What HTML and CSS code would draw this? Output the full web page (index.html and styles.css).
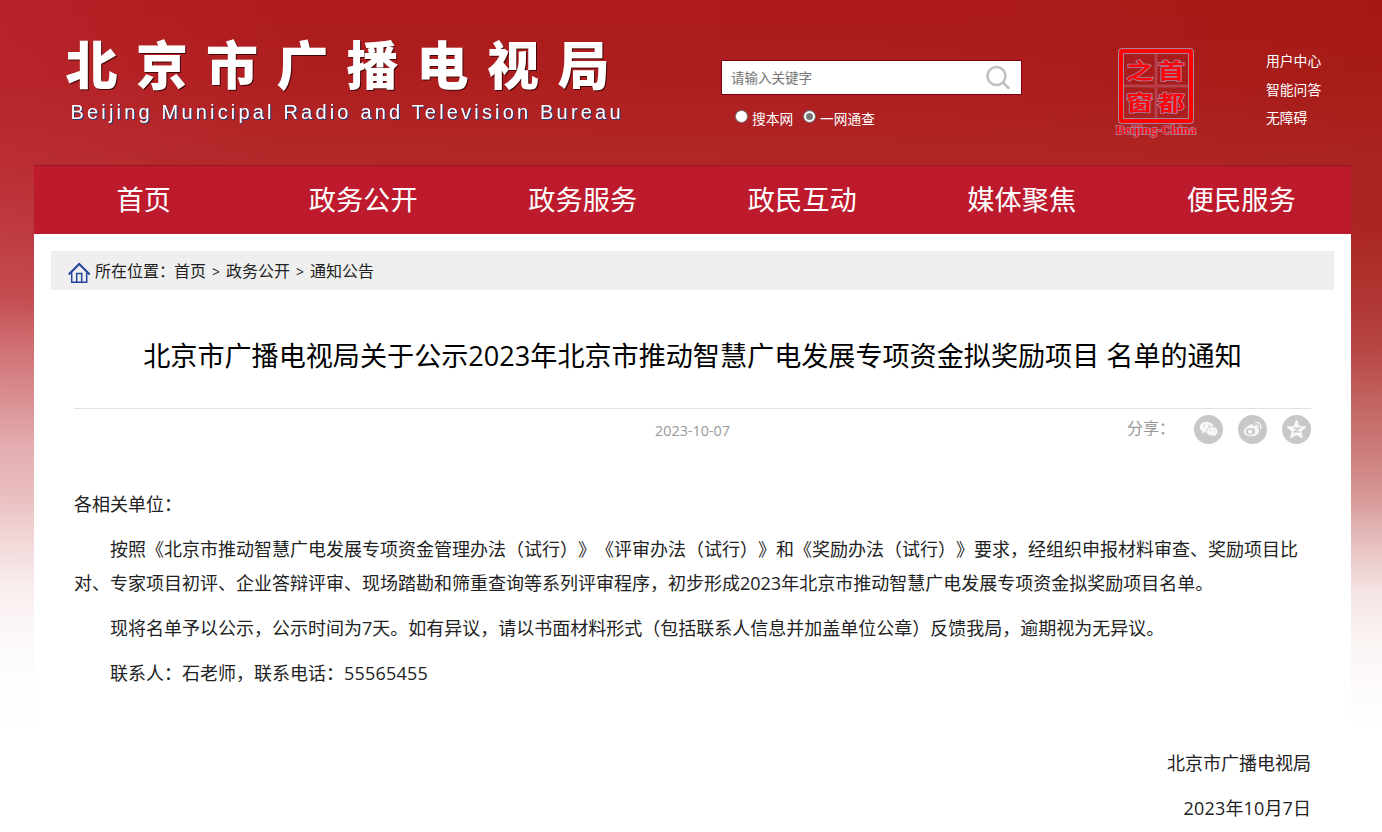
FILE: index.html
```html
<!DOCTYPE html>
<html lang="zh-CN">

<head>
    <meta charset="UTF-8">
    <meta name="viewport" content="width=device-width, initial-scale=1.0">
    <title>北京市广播电视局</title>
    <link rel="stylesheet" href="styles.css">
</head>

<body>
    <div class="wrapper">

        <!-- Header -->
        <header class="header">
            <svg class="logo" width="570" height="100" viewBox="0 0 570 100">
                <text class="logo-cn" x="4.5 75 145 215.5 285.5 355.5 426 496.5" y="55">北京市广播电视局</text>
                <text class="logo-en" x="9.5" y="89" textLength="550">Beijing Municipal Radio and Television Bureau</text>
            </svg>

            <form class="search">
                <div class="search-box">
                    <input type="text" placeholder="请输入关键字">
                    <svg class="search-icon" width="26" height="26" viewBox="0 0 26 26">
                        <circle cx="10.5" cy="11" r="9" />
                        <path d="M17 17.5L22.5 23" />
                    </svg>
                </div>
                <div class="search-type">
                    <label><i class="radio"></i>搜本网</label>
                    <label><i class="radio checked"></i>一网通查</label>
                </div>
            </form>

            <svg class="seal" width="86" height="94" viewBox="0 0 86 94">
                <g class="seal-halo">
                    <rect x="7" y="5" width="70" height="70" rx="1" />
                    <path d="M42 8V72M10 40H74" />
                </g>
                <rect class="seal-frame" x="7" y="5" width="70" height="70" rx="1" />
                <path class="seal-lines" d="M42 8V72M10 40H74" />
                <g class="seal-cn">
                    <text transform="translate(12 31.5) scale(1.3 1)">之</text>
                    <text transform="translate(43.5 31.5) scale(1.3 1)">首</text>
                    <text transform="translate(12 64) scale(1.3 1)">窗</text>
                    <text transform="translate(43.5 64) scale(1.3 1)">都</text>
                </g>
                <text class="seal-en" x="2" y="88" textLength="80">Beijing-China</text>
            </svg>

            <ul class="user-links">
                <li><a href="#">用户中心</a></li>
                <li><a href="#">智能问答</a></li>
                <li><a href="#">无障碍</a></li>
            </ul>
        </header>

        <!-- Navigation -->
        <nav class="nav">
            <a href="#">首页</a>
            <a href="#">政务公开</a>
            <a href="#">政务服务</a>
            <a href="#">政民互动</a>
            <a href="#">媒体聚焦</a>
            <a href="#">便民服务</a>
        </nav>

        <main class="content">
            <!-- Breadcrumb -->
            <div class="crumb">
                <svg class="home-icon" width="24" height="22" viewBox="0 0 24 22">
                    <path class="roof" d="M.7 12.5L11.2 2L21.7 12.5" />
                    <path d="M3.7 10.5V20.3H18.7V10.5M8.7 20V11.5H13.7V20" />
                </svg>
                <span>所在位置：</span><a href="#">首页</a><i>&gt;</i><a href="#">政务公开</a><i>&gt;</i><a href="#">通知公告</a>
            </div>

            <article class="article">
                <h1>北京市广播电视局关于公示2023年北京市推动智慧广电发展专项资金拟奖励项目 名单的通知</h1>

                <div class="info">
                    <span class="date">2023-10-07</span>
                    <div class="share">
                        <span>分享：</span>
                        <svg width="29" height="29" viewBox="0 0 30 30">
                            <circle class="disc" cx="15" cy="15" r="15" />
                            <path class="mark" d="M13 7C8.9 7 6 9.4 6 12.5c0 1.9 1 3.4 2.5 4.4L8 19.2l2.7-1.4c.8.2 1.5.2 2.3.2 4.1 0 7.2-2.4 7.2-5.5S17.1 7 13 7z" />
                            <path class="mark edge" d="M18.8 12.2c-3.5 0-6 2.1-6 4.8s2.5 4.800 6 4.800c.8 0 1.500-.1 2.100-.3l2.300 1.200-.5-2c1.300-.9 2.100-2.200 2.100-3.700 0-2.700-2.500-4.800-6-4.800z" />
                            <g class="dots">
                                <circle cx="10.7" cy="11" r=".9" />
                                <circle cx="15.5" cy="11" r=".9" />
                                <circle cx="17" cy="15.8" r=".8" />
                                <circle cx="21" cy="15.8" r=".8" />
                            </g>
                        </svg>
                        <svg width="29" height="29" viewBox="0 0 30 30">
                            <circle class="disc" cx="15" cy="15" r="15" />
                            <path class="mark" d="M13 10c1.5-.7 3.3-.5 2.9 1.9 2.2-.8 4.5-.5 3.9 1.7 4 1.400 2 8.400-6.300 8.400C9 22 6 20 6 17.400 6 14.600 9.500 11.200 13 10z" />
                            <ellipse class="eye" cx="13" cy="17" rx="4.8" ry="3.5" />
                            <circle class="mark" cx="12.5" cy="17.2" r="2.2" />
                            <path class="wave" d="M18.5 10.6c1.7-.3 3 1.1 2.5 2.7M18.2 7.8c3.7-.7 6.5 2.5 5.3 6" />
                        </svg>
                        <svg width="29" height="29" viewBox="0 0 30 30">
                            <circle class="disc" cx="15" cy="15" r="15" />
                            <path class="mark star" d="M15 6l2.6 6 6.5.5-4.9 4.2 1.5 6.4L15 19.7l-5.7 3.4 1.5-6.4-4.9-4.2 6.5-.5z" />
                            <path class="zed" d="M12 13.5h6l-5.5 4h6" />
                        </svg>
                    </div>
                </div>

                <div class="text">
                    <p class="no-indent">各相关单位：</p>
                    <p>按照《北京市推动智慧广电发展专项资金管理办法（试行）》《评审办法（试行）》和《奖励办法（试行）》要求，经组织申报材料审查、奖励项目比对、专家项目初评、企业答辩评审、现场踏勘和筛重查询等系列评审程序，初步形成2023年北京市推动智慧广电发展专项资金拟奖励项目名单。</p>
                    <p>现将名单予以公示，公示时间为7天。如有异议，请以书面材料形式（包括联系人信息并加盖单位公章）反馈我局，逾期视为无异议。</p>
                    <p>联系人：石老师，联系电话：<span class="num">55565455</span></p>
                    <div class="sign">
                        <p>北京市广播电视局</p>
                        <p><span class="num">2023</span>年<span class="num">10</span>月<span class="num">7</span>日</p>
                    </div>
                </div>
            </article>
        </main>
    </div>
</body>

</html>
```

FILE: styles.css
```css
* {
    margin: 0;
    padding: 0;
    box-sizing: border-box;
}

body {
    height: 832px;
    overflow: hidden;
    font-family: "Open Sans", "Noto Sans CJK SC", sans-serif;
    font-size: 14px;
    color: #222;
    text-spacing-trim: space-all;
    /* both sides fade to white, the left one a little earlier */
    background:
        linear-gradient(to bottom,
            rgba(255, 255, 255, 0) 165px,
            rgba(255, 255, 255, 0.06) 230px,
            rgba(255, 255, 255, 0.08) 300px,
            rgba(255, 255, 255, 0.2) 350px,
            rgba(255, 255, 255, 0.26) 400px,
            rgba(255, 255, 255, 0.36) 450px,
            rgba(255, 255, 255, 0.36) 530px,
            rgba(255, 255, 255, 0.4) 590px,
            rgba(255, 255, 255, 0.5) 730px) 0 0 / 34px 100% no-repeat,
        linear-gradient(to bottom,
            rgba(255, 255, 255, 0) 0,
            rgba(255, 255, 255, 0.01) 80px,
            rgba(255, 255, 255, 0.05) 160px,
            rgba(255, 255, 255, 0.06) 230px,
            rgba(255, 255, 255, 0.13) 300px,
            rgba(255, 255, 255, 0.2) 350px,
            rgba(255, 255, 255, 0.32) 400px,
            rgba(255, 255, 255, 0.43) 450px,
            rgba(255, 255, 255, 0.56) 500px,
            rgba(255, 255, 255, 0.68) 530px,
            rgba(255, 255, 255, 0.88) 590px,
            rgba(255, 255, 255, 0.96) 650px,
            #fff 730px),
        linear-gradient(to right, #b62228 0, #ae1c1d 22%, #ac1a1b 70%, #a51915 100%);
}

a {
    color: inherit;
    text-decoration: none;
}

ul {
    list-style: none;
}

.wrapper {
    width: 1317px;
    margin-left: 34px;
}

/* Header */
.header {
    height: 165px;
    display: flex;
    align-items: flex-start;
    color: #fff;
}

.logo {
    margin: 30px 0 0 27px;
    overflow: visible;
}

.logo text {
    fill: #fff;
}

.logo-cn {
    font-family: "Noto Sans CJK SC", sans-serif;
    font-size: 52px;
    font-weight: 900;
    filter: drop-shadow(1px 1px 0.5px rgba(40, 0, 0, 0.8));
}

.logo-en {
    font-family: "Liberation Sans", sans-serif;
    font-size: 20px;
    filter: drop-shadow(1px 1px 0 #283a70);
}

.search {
    width: 301px;
    margin: 60px 0 0 90px;
}

.search-box {
    height: 35px;
    display: flex;
    align-items: center;
    background: #fff;
    border: 1px solid #7d0012;
    padding: 0 9px;
}

.search-box input {
    flex: 1;
    min-width: 0;
    border: none;
    outline: none;
    background: none;
    font-family: inherit;
    font-size: 13.5px;
    color: #333;
}

.search-box input::placeholder {
    color: #757575;
}

.search-icon {
    fill: none;
    stroke: #bfbfbf;
    stroke-width: 2.5;
    stroke-linecap: round;
}

.search-type {
    display: flex;
    gap: 10px;
    margin: 13px 0 0 14px;
    font-size: 13.7px;
    line-height: 22px;
}

.search-type label {
    display: flex;
}

.radio {
    width: 13px;
    height: 13px;
    margin: 2px 4px 0 0;
    border-radius: 50%;
    background: #fff;
    border: 1px solid #767676;
}

.radio.checked {
    background: #767676;
    box-shadow: inset 0 0 0 2px #fff;
}

/* Seal */
.seal {
    margin: 46px 0 0 92px;
    overflow: visible;
}

.seal-halo {
    fill: none;
    stroke: #a9829c;
    stroke-width: 6;
}

.seal-halo path {
    stroke-width: 2.5;
    stroke: #a06a76;
}

.seal-frame {
    fill: none;
    stroke: #f00;
    stroke-width: 4;
}

.seal-lines {
    fill: none;
    stroke: #d4141c;
    stroke-width: 1;
}

.seal-cn text,
.seal-en {
    fill: #f8040a;
    stroke: #a9829c;
    stroke-width: 1.5px;
    paint-order: stroke;
}

.seal-cn text {
    font-family: "Noto Sans CJK SC", sans-serif;
    font-size: 21px;
    font-weight: 700;
}

.seal-en {
    font-family: "Liberation Serif", serif;
    font-size: 13px;
    font-weight: bold;
}

.user-links {
    margin: 47px 0 0 66px;
    font-size: 13.8px;
    line-height: 28.5px;
}

/* Navigation */
.nav {
    height: 69px;
    display: grid;
    grid-template-columns: repeat(6, 1fr);
    background: #bd1a2d;
    border-top: 1px solid #951722;
    color: #fff;
    font-size: 27.2px;
    line-height: 67px;
    text-align: center;
}

/* Content */
.content {
    height: 598px;
    padding: 17px 17px 0;
    background: #fff;
}

.crumb {
    height: 39px;
    padding-left: 17px;
    display: flex;
    align-items: center;
    background: #efefef;
    font-size: 16px;
    line-height: 39px;
}

.crumb span {
    margin-right: -1px;
}

.crumb span,
.crumb a,
.crumb i {
    padding-top: 1px;
}

.crumb i {
    width: 20px;
    font-size: 14px;
    font-style: normal;
    text-align: center;
}

.home-icon {
    margin: 4px 3px 0 0;
    fill: none;
    stroke: #24459c;
    stroke-width: 1.5;
}

.home-icon .roof {
    stroke-width: 2;
}

.article {
    padding: 0 23px;
}

.article h1 {
    height: 119px;
    padding-top: 46px;
    border-bottom: 1px solid #e2e2e2;
    font-size: 27.1px;
    font-weight: normal;
    line-height: 40px;
    text-align: center;
    white-space: nowrap;
    color: #000;
}

.info {
    height: 42px;
    display: grid;
    grid-template-columns: 1fr auto 1fr;
    align-items: center;
    color: #999;
}

.date {
    grid-column: 2;
    font-size: 14.4px;
}

.share {
    display: flex;
    justify-content: flex-end;
    align-items: center;
    gap: 15px;
    padding-bottom: 2px;
    font-size: 16px;
    line-height: 28px;
}

.share span {
    margin: -3px 4px 0 0;
}

.share .disc {
    fill: #c8c8c8;
}

.share .mark {
    fill: #f8f8f8;
}

.share .edge {
    stroke: #c8c8c8;
    stroke-width: 0.8;
}

.share .dots {
    fill: #c8c8c8;
}

.share .eye {
    fill: #c8c8c8;
}

.share .wave {
    fill: none;
    stroke: #f8f8f8;
    stroke-width: 1.4;
    stroke-linecap: round;
}

.share .star {
    stroke: #f8f8f8;
    stroke-width: 1.5;
    stroke-linejoin: round;
}

.share .zed {
    fill: none;
    stroke: #c8c8c8;
    stroke-width: 1.2;
}

.text {
    padding-top: 36px;
    font-size: 18px;
    line-height: 34px;
}

.text p {
    margin-bottom: 11px;
    text-indent: 2em;
}

.text .no-indent {
    text-indent: 0;
}

.num {
    letter-spacing: 0.2px;
}

.sign {
    margin-top: 56px;
    text-align: right;
}
```
